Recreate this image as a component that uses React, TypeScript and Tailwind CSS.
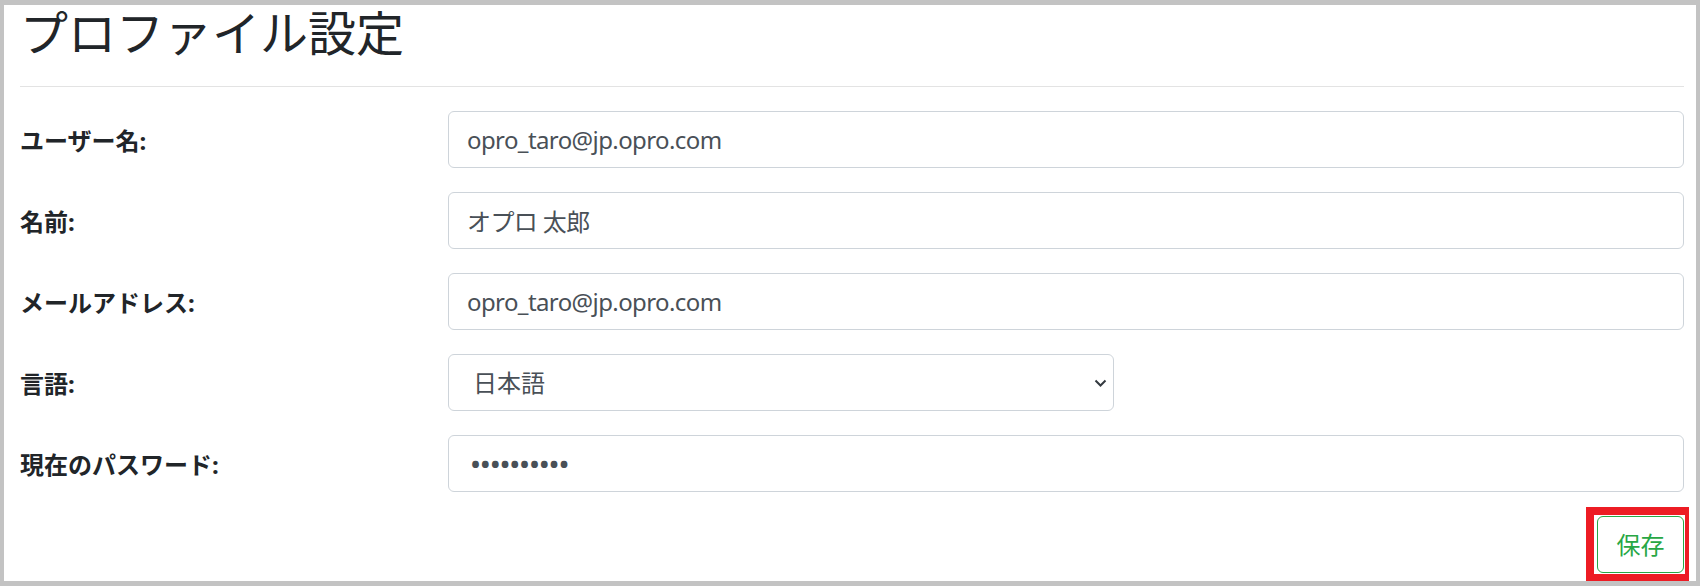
import React from "react";

const jp = "font-['Segoe_UI','Noto_Sans','Noto_Sans_CJK_JP',sans-serif]";

const fields: { label: string; value: string; kind: "text" | "select" | "password" }[] = [
  { label: "ユーザー名:", value: "opro_taro@jp.opro.com", kind: "text" },
  { label: "名前:", value: "オプロ 太郎", kind: "text" },
  { label: "メールアドレス:", value: "opro_taro@jp.opro.com", kind: "text" },
  { label: "言語:", value: "日本語", kind: "select" },
  { label: "現在のパスワード:", value: "••••••••••", kind: "password" },
];

function Field({ value, kind }: { value: string; kind: "text" | "select" | "password" }) {
  if (kind === "select") {
    return (
      <div className="relative w-[666px]">
        <select
          defaultValue={value}
          className={`h-[57px] w-full appearance-none rounded-[6px] border border-[#ced4da] bg-white pl-[24px] pr-[40px] text-[24px] text-[#495057] outline-none ${jp}`}
        >
          <option>{value}</option>
          <option>English</option>
        </select>
        <svg
          className="pointer-events-none absolute right-[7px] top-1/2 -translate-y-1/2"
          width="13"
          height="8"
          viewBox="0 0 13 8"
          fill="none"
        >
          <path d="M1.5 1.5l5 5 5-5" stroke="#343a40" strokeWidth="2" />
        </svg>
      </div>
    );
  }
  return (
    <input
      readOnly
      type="text"
      value={value}
      className={`h-[57px] w-full rounded-[6px] border border-[#ced4da] bg-white px-[18px] text-[24px] text-[#495057] outline-none ${jp} ${
        kind === "password" ? "pl-[22px] font-bold tracking-[0.8px]" : "tracking-[-0.6px]"
      }`}
    />
  );
}

export default function App() {
  return (
    <div className="h-[586px] w-[1700px] bg-[#c3c3c3] pb-[5px] pl-[4px] pr-[4px] pt-[5px]">
      <div className={`flex h-full flex-col bg-white pl-[16px] pr-[12px] text-[#212529] ${jp}`}>
        <h2 className="-mt-[1px] text-[48px] font-normal leading-[58px]">プロファイル設定</h2>
        <hr className="mt-[24px] border-t border-[#e3e3e3]" />
        <div className="mt-[24px] grid grid-cols-[428px_1fr] gap-y-[24px]">
          {fields.map((f) => (
            <React.Fragment key={f.label}>
              <label className="flex h-[57px] items-center pt-[2px] text-[24px] font-bold">{f.label}</label>
              <Field value={f.value} kind={f.kind} />
            </React.Fragment>
          ))}
        </div>
        <div className="mt-[24px] flex justify-end">
          <div className="relative">
            <button className="h-[57px] w-[87px] rounded-[6px] border border-[#28a745] bg-white text-[24px] text-[#28a745]">
              保存
            </button>
            <div className="pointer-events-none absolute -bottom-[8px] -left-[11px] -right-[5px] -top-[9px] border-b-[7px] border-l-[8px] border-r-[4px] border-t-[8px] border-[#ed1c24]" />
          </div>
        </div>
      </div>
    </div>
  );
}
